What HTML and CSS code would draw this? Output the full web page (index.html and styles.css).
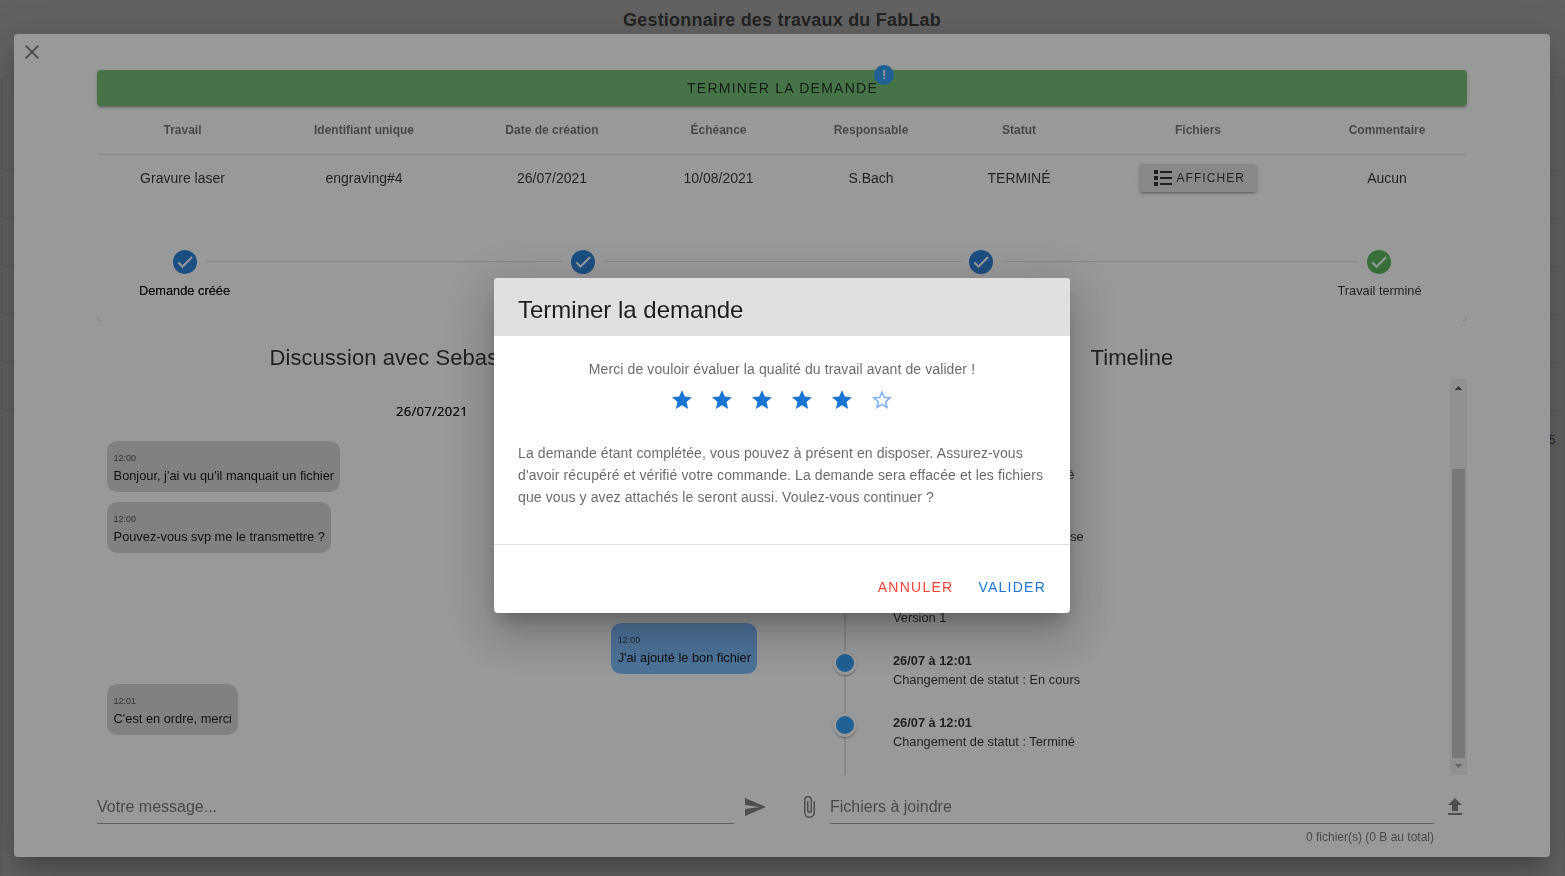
FILE: index.html
```html
<!DOCTYPE html>
<html lang="fr">
<head>
<meta charset="utf-8">
<title>Gestionnaire des travaux du FabLab</title>
<link rel="stylesheet" href="styles.css">
</head>
<body>
<svg class="sprite" width="0" height="0">
  <symbol id="check" viewBox="0 0 24 24"><path d="M21,7L9,19L3.5,13.5L4.91,12.09L9,16.17L19.59,5.59L21,7Z"/></symbol>
  <symbol id="star" viewBox="0 0 24 24"><path d="M12,17.27L18.18,21L16.54,13.97L22,9.24L14.81,8.62L12,2L9.19,8.62L2,9.24L7.45,13.97L5.82,21L12,17.27Z"/></symbol>
  <symbol id="star-outline" viewBox="0 0 24 24"><path d="M12,15.39L8.24,17.66L9.23,13.38L5.91,10.5L10.29,10.13L12,6.09L13.71,10.13L18.09,10.5L14.77,13.38L15.76,17.66M22,9.24L14.81,8.63L12,2L9.19,8.63L2,9.24L7.45,13.97L5.82,21L12,17.27L18.18,21L16.54,13.97L22,9.24Z"/></symbol>
</svg>

<main class="page">
  <h1 class="page-title">Gestionnaire des travaux du FabLab</h1>
  <section class="sheet">
    <div class="sheet-head"></div>
    <div class="sheet-row"></div><div class="sheet-row"></div><div class="sheet-row"></div><div class="sheet-row"></div><div class="sheet-row"></div>
    <div class="sheet-foot">5</div>
  </section>
</main>

<div class="overlay">
  <section class="job">
    <svg class="close" viewBox="0 0 14 14"><path d="M0.6 0.6L13.4 13.4M13.4 0.6L0.6 13.4"/></svg>
    <div class="job-body">
      <button class="finish"><span class="finish-label">Terminer la demande<span class="badge">!</span></span></button>

      <table class="jobs">
        <colgroup><col class="c1"><col class="c2"><col class="c3"><col class="c4"><col class="c5"><col class="c6"><col class="c7"><col class="c8"></colgroup>
        <thead><tr><th>Travail</th><th>Identifiant unique</th><th>Date de création</th><th>Échéance</th><th>Responsable</th><th>Statut</th><th>Fichiers</th><th>Commentaire</th></tr></thead>
        <tbody><tr><td>Gravure laser</td><td>engraving#4</td><td>26/07/2021</td><td>10/08/2021</td><td>S.Bach</td><td>TERMINÉ</td>
          <td><button class="show"><svg class="icon" viewBox="0 0 24 24"><path d="M3,4H7V8H3V4M9,5V7H21V5H9M3,10H7V14H3V10M9,11V13H21V11H9M3,16H7V20H3V16M9,17V19H21V17H9"/></svg>Afficher</button></td>
          <td>Aucun</td></tr></tbody>
      </table>

      <div class="stepper">
        <div class="step active"><span class="dot"><svg><use href="#check"/></svg></span><span>Demande créée</span></div>
        <hr class="rule">
        <div class="step"><span class="dot"><svg><use href="#check"/></svg></span><span>Demande traitée</span></div>
        <hr class="rule">
        <div class="step"><span class="dot"><svg><use href="#check"/></svg></span><span>Travail en cours</span></div>
        <hr class="rule">
        <div class="step done"><span class="dot"><svg><use href="#check"/></svg></span><span>Travail terminé</span></div>
      </div>

      <div class="columns">
        <section class="chat">
          <h2>Discussion avec Sebastien Bach</h2>
          <div class="messages">
            <div class="day">26/07/2021</div>
            <div class="msg"><small>12:00</small>Bonjour, j'ai vu qu'il manquait un fichier</div>
            <div class="msg"><small>12:00</small>Pouvez-vous svp me le transmettre ?</div>
            <div class="msg mine later"><small>12:00</small>J'ai ajouté le bon fichier</div>
            <div class="msg"><small>12:01</small>C'est en ordre, merci</div>
          </div>
          <div class="compose">
            <div class="field">Votre message...</div>
            <svg class="icon send" viewBox="0 0 24 24"><path d="M2,21L23,12L2,3V10L17,12L2,14V21Z"/></svg>
          </div>
        </section>

        <section class="history">
          <h2>Timeline</h2>
          <div class="scroller">
            <div class="timeline">
              <div class="event"><i></i><p><b>26/07 à 12:00</b>Changement de statut : Assigné</p></div>
              <div class="event"><i></i><p><b>26/07 à 12:00</b>Changement de statut : En pause</p></div>
              <div class="event tall"><i></i><p><b>26/07 à 12:00</b>Ajout d'un fichier<br>Version 1</p></div>
              <div class="event"><i></i><p><b>26/07 à 12:01</b>Changement de statut : En cours</p></div>
              <div class="event"><i></i><p><b>26/07 à 12:01</b>Changement de statut : Terminé</p></div>
            </div>
            <div class="scrollbar">
              <svg class="arrow" viewBox="0 0 17 17"><path d="M4.6 11L8.5 7L12.4 11Z"/></svg>
              <div class="thumb"></div>
              <svg class="arrow end" viewBox="0 0 17 17"><path d="M4.6 6L8.5 10L12.4 6Z"/></svg>
            </div>
          </div>
          <div class="compose">
            <svg class="icon clip" viewBox="0 0 24 24"><path d="M16.5,6V17.5A4,4 0 0,1 12.5,21.5A4,4 0 0,1 8.5,17.5V5A2.5,2.5 0 0,1 11,2.5A2.5,2.5 0 0,1 13.5,5V15.5A1,1 0 0,1 12.5,16.5A1,1 0 0,1 11.5,15.5V6H10V15.5A2.5,2.5 0 0,0 12.5,18A2.5,2.5 0 0,0 15,15.5V5A4,4 0 0,0 11,1A4,4 0 0,0 7,5V17.5A5.5,5.5 0 0,0 12.5,23A5.5,5.5 0 0,0 18,17.5V6H16.5Z"/></svg>
            <div class="attach">
              <div class="field">Fichiers à joindre</div>
              <div class="counter">0 fichier(s) (0 B au total)</div>
            </div>
            <svg class="icon upload" viewBox="0 0 24 24"><path d="M9,16V10H5L12,3L19,10H15V16H9M5,20V18H19V20H5Z"/></svg>
          </div>
        </section>
      </div>
    </div>
  </section>
</div>

<div class="overlay center">
  <section class="confirm">
    <h2>Terminer la demande</h2>
    <div class="confirm-body">
      <p class="ask">Merci de vouloir évaluer la qualité du travail avant de valider !</p>
      <div class="stars">
        <svg><use href="#star"/></svg><svg><use href="#star"/></svg><svg><use href="#star"/></svg><svg><use href="#star"/></svg><svg><use href="#star"/></svg><svg class="empty"><use href="#star-outline"/></svg>
      </div>
      <p class="notice">La demande étant complétée, vous pouvez à présent en disposer. Assurez-vous d'avoir récupéré et vérifié votre commande. La demande sera effacée et les fichiers que vous y avez attachés le seront aussi. Voulez-vous continuer ?</p>
    </div>
    <footer><button class="cancel">Annuler</button><button class="ok">Valider</button></footer>
  </section>
</div>
</body>
</html>
```
FILE: styles.css
```css
* { box-sizing: border-box; }
body {
  margin: 0;
  height: 876px;
  overflow: hidden;
  background: #fff;
  color: rgba(0, 0, 0, .87);
  font-family: "Liberation Sans", Arial, sans-serif;
}
h1, h2, p { margin: 0; font-weight: 400; }
button {
  font-family: inherit;
  font-size: 14px;
  letter-spacing: 1.25px;
  text-transform: uppercase;
  color: rgba(0, 0, 0, .87);
  border: 0;
  border-radius: 4px;
  background: none;
  padding: 0;
}
.sprite { position: absolute; }
.icon { width: 24px; height: 24px; fill: currentColor; flex: none; }

/* Page behind the dialogs */
.page { height: 876px; overflow: hidden; }
.page-title {
  height: 78px;
  padding: 8px 1px 0 0;
  text-align: center;
  font-size: 18px;
  font-weight: 700;
  line-height: 24px;
  letter-spacing: .2px;
}
.sheet { margin: 0 2px; box-shadow: 0 0 2px rgba(0, 0, 0, .3); height: 900px; }
.sheet-head { height: 93px; border-bottom: 1px solid rgba(0, 0, 0, .12); }
.sheet-row { height: 48px; border-bottom: 1px solid rgba(0, 0, 0, .12); }
.sheet-foot { height: 58px; padding-right: 7.5px; text-align: right; line-height: 58px; font-size: 12px; }

.overlay {
  position: fixed;
  inset: 0;
  display: flex;
  justify-content: center;
  background: rgba(33, 33, 33, .46);
}
.overlay.center { align-items: center; }

/* Job dialog */
.job, .confirm {
  background: #fff;
  border-radius: 4px;
  box-shadow: 0 11px 15px -7px rgba(0, 0, 0, .2), 0 24px 38px 3px rgba(0, 0, 0, .14), 0 9px 46px 8px rgba(0, 0, 0, .12);
}
.job { position: relative; width: 1536px; height: 823px; margin: 34px 1px 0 0; padding: 36px 83px 0; }
.close {
  position: absolute;
  left: 11px;
  top: 11px;
  width: 14px;
  height: 14px;
  stroke: rgba(0, 0, 0, .6);
  stroke-width: 1.6;
}
.finish {
  display: block;
  width: 100%;
  height: 36px;
  padding-left: 1px;
  background: #66bb6a;
  box-shadow: 0 3px 1px -2px rgba(0, 0, 0, .2), 0 2px 2px rgba(0, 0, 0, .14), 0 1px 5px rgba(0, 0, 0, .12);
}
.finish-label { position: relative; }
.badge {
  position: absolute;
  left: calc(100% - 4px);
  top: -15px;
  width: 20px;
  height: 20px;
  border-radius: 50%;
  background: #2196f3;
  color: #fff;
  font-size: 12px;
  font-weight: 700;
  line-height: 20px;
  letter-spacing: 0;
  text-align: center;
}

.jobs { width: 1370px; table-layout: fixed; border-collapse: separate; border-spacing: 0; text-align: center; font-size: 14px; }
.jobs th { height: 49px; padding: 0; font-size: 12px; color: rgba(0, 0, 0, .6); border-bottom: 1px solid rgba(0, 0, 0, .12); }
.jobs td { height: 47px; padding: 0 0 2px; }
.c1 { width: 171px; }
.c2 { width: 192px; }
.c3 { width: 184px; }
.c4 { width: 149px; }
.c5 { width: 156px; }
.c6 { width: 140px; }
.c7 { width: 218px; }
.c8 { width: 160px; }
.show {
  display: inline-flex;
  align-items: center;
  width: 118px;
  height: 28px;
  padding-left: 12px;
  font-size: 12px;
  letter-spacing: 1.07px;
  background: #e0e0e0;
  vertical-align: middle;
  box-shadow: 0 3px 1px -2px rgba(0, 0, 0, .2), 0 2px 2px rgba(0, 0, 0, .14), 0 1px 5px rgba(0, 0, 0, .12);
}
.show .icon { margin-right: 1.5px; }

.stepper {
  position: relative;
  display: flex;
  height: 119px;
  padding-top: 48px;
}
.stepper::before, .stepper::after {
  content: "";
  position: absolute;
  bottom: 0;
  width: 3px;
  height: 3px;
  border-bottom: 1px solid rgba(0, 0, 0, .14);
}
.stepper::before { left: 0; border-left: 1px solid rgba(0, 0, 0, .14); border-bottom-left-radius: 3px; }
.stepper::after { right: 0; border-right: 1px solid rgba(0, 0, 0, .14); border-bottom-right-radius: 3px; }
.step { width: 175px; display: flex; flex-direction: column; align-items: center; gap: 9px; font-size: 12.8px; line-height: 15px; flex: none; }
.step.active { text-shadow: 0 0 0 #000; }
.dot { display: flex; align-items: center; justify-content: center; width: 24px; height: 24px; border-radius: 50%; background: #1976d2; }
.dot svg { width: 20px; height: 20px; fill: #fff; stroke: #fff; stroke-width: .8; flex: none; }
.step.done .dot { background: #4caf50; }
.rule { flex: 1; height: 1px; margin: 11px -67px 0; border: 0; background: rgba(0, 0, 0, .12); }

.columns { display: grid; grid-template-columns: 670px 670px; gap: 30px; }
.columns h2 { height: 58px; padding-top: 23px; text-align: center; font-size: 22px; line-height: 28px; letter-spacing: .06px; }
.chat h2 { padding-right: 4px; }
.messages { height: 396px; padding: 24px 10px 0; display: flex; flex-direction: column; align-items: flex-start; gap: 10px; }
.day { align-self: center; height: 28px; font: 400 13px/16px "Noto Sans", sans-serif; letter-spacing: .3px; text-shadow: 0 0 0 rgba(0, 0, 0, .87); }
.msg { height: 51px; padding: 11px 6px 0 6.6px; border-radius: 10px; background: #d3d3d3; font-size: 12.8px; line-height: 18px; color: #000; white-space: nowrap; }
.msg small { display: block; padding-bottom: 2px; font-size: 9px; line-height: 13px; color: rgba(0, 0, 0, .75); }
.msg.mine { align-self: flex-end; background: #74b9ff; }
.msg.later { margin-top: 60px; }

.compose { display: flex; padding-top: 14px; color: rgba(0, 0, 0, .54); }
.field { flex: 1; height: 35px; font-size: 16px; line-height: 35px; color: rgba(0, 0, 0, .6); border-bottom: 1px solid rgba(0, 0, 0, .42); }
.chat .compose .field { flex: none; width: 637px; }
.send { margin: 6px 0 0 9px; color: rgba(0, 0, 0, .54); }
.clip { margin: 6px 9px 0 0; }
.attach { width: 604px; display: flex; flex-direction: column; }
.attach .field { flex: none; }
.counter { padding-top: 6px; text-align: right; font-size: 12px; line-height: 14px; color: rgba(0, 0, 0, .6); }
.upload { margin: 6px 0 0 9px; color: rgba(0, 0, 0, .54); }

.scroller { display: flex; height: 396px; overflow: hidden; }
.timeline {
  flex: 1;
  display: flex;
  flex-direction: column;
  justify-content: flex-end;
  padding: 0 0 19px 36px;
  background: linear-gradient(rgba(0, 0, 0, .12), rgba(0, 0, 0, .12)) 47px 0 / 2px 100% no-repeat;
}
.event { display: flex; height: 62px; padding-top: 19px; font-size: 12.8px; line-height: 19px; flex: none; }
.event.tall { height: 81px; }
.event i {
  width: 24px;
  height: 24px;
  border: 3px solid #fff;
  border-radius: 50%;
  background: #2196f3;
  margin-right: 36px;
  box-shadow: 0 2px 1px -1px rgba(0, 0, 0, .2), 0 1px 1px rgba(0, 0, 0, .14), 0 1px 3px rgba(0, 0, 0, .12);
}
.event b { display: block; }
.scrollbar { width: 17px; background: #f1f1f1; display: flex; flex-direction: column; }
.thumb { height: 289px; margin: auto 2px 0; background: #c1c1c1; }
.arrow { height: 17px; fill: #505050; flex: none; }
.arrow.end { fill: #a3a3a3; }

/* Confirmation dialog */
.confirm { width: 576px; height: 335px; margin: 15px 1px 0 0; overflow: hidden; }
.confirm h2 { height: 58px; padding: 16px 24px 0; font-size: 24px; line-height: 32px; background: #e0e0e0; }
.confirm-body {
  height: 209px;
  padding: 22px 24px 0;
  font-size: 14px;
  line-height: 22px;
  letter-spacing: .1px;
  color: rgba(0, 0, 0, .6);
  border-bottom: 1px solid rgba(0, 0, 0, .12);
}
.ask { text-align: center; }
.stars { display: flex; justify-content: center; gap: 16px; margin: 8px 0 30px; }
.stars svg { width: 24px; height: 24px; fill: #1976d2; }
.stars .empty { fill: #82b1ff; }
.confirm footer { display: flex; justify-content: flex-end; gap: 25px; height: 68px; padding: 17px 24px 0 0; }
.confirm button { height: 50px; }
.cancel { color: #f44336; }
.ok { color: #1976d2; }
```
